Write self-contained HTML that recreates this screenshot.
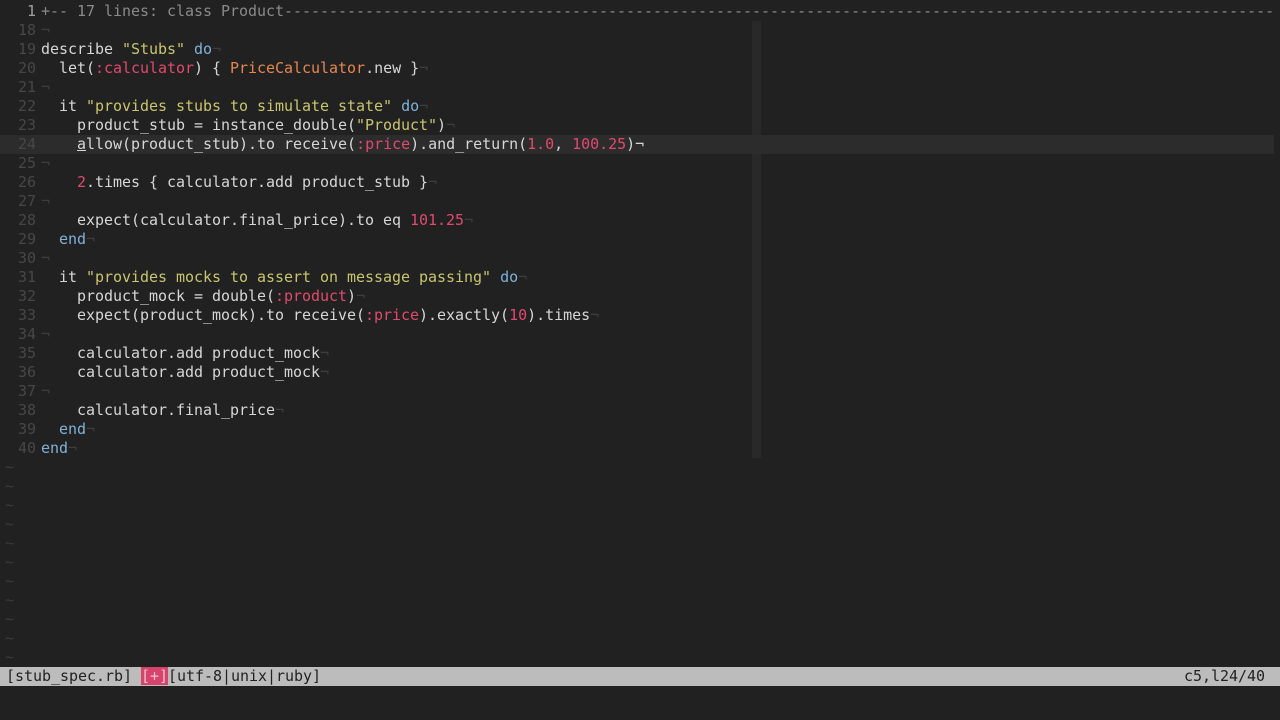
<!DOCTYPE html>
<html><head><meta charset="utf-8"><style>
html,body{margin:0;padding:0;background:#212121;width:1280px;height:720px;overflow:hidden}
body{font-family:"DejaVu Sans Mono","Liberation Mono",monospace;font-size:15px;color:#d6d6d6;letter-spacing:-0.03px}
.r{position:absolute;left:0;height:19px;line-height:19px;white-space:pre;width:1274px;overflow:hidden}
.n{display:inline-block;width:36px;text-align:right;color:#474747;margin-right:5px}
.cur{background:#2c2c2c}
.k{color:#7fb2d8}.s{color:#c9c56e}.y{color:#e04a6e}.c{color:#e5864f}.x{color:#3e3e3e}
.f{color:#8a8a8a}.t{color:#3a3a3a;padding-left:5px}
#cc{position:absolute;left:752px;top:21px;width:9px;height:437px;background:#292929}
#st{position:absolute;left:0;top:667px;width:1280px;height:19px;line-height:19px;background:#bcbcbc;color:#222;white-space:pre}
.p{background:#d6436b;color:#f0c0cc}
</style></head><body>
<div id="cc"></div>
<div class="r" style="top:2px"><span class="n" style="color:#a0a0a0">1</span><span class="f">+-- 17 lines: class Product----------------------------------------------------------------------------------------------------------------------</span></div>
<div class="r" style="top:21px"><span class="n">18</span><span class="x">¬</span></div>
<div class="r" style="top:40px"><span class="n">19</span>describe <span class="s">"Stubs"</span> <span class="k">do</span><span class="x">¬</span></div>
<div class="r" style="top:59px"><span class="n">20</span>  let(<span class="y">:calculator</span>) { <span class="c">PriceCalculator</span>.new }<span class="x">¬</span></div>
<div class="r" style="top:78px"><span class="n">21</span><span class="x">¬</span></div>
<div class="r" style="top:97px"><span class="n">22</span>  it <span class="s">"provides stubs to simulate state"</span> <span class="k">do</span><span class="x">¬</span></div>
<div class="r" style="top:116px"><span class="n">23</span>    product_stub = instance_double(<span class="s">"Product"</span>)<span class="x">¬</span></div>
<div class="r cur" style="top:135px"><span class="n">24</span>    <u>a</u>llow(product_stub).to receive(<span class="y">:price</span>).and_return(<span class="y">1.0</span>, <span class="y">100.25</span>)¬</div>
<div class="r" style="top:154px"><span class="n">25</span><span class="x">¬</span></div>
<div class="r" style="top:173px"><span class="n">26</span>    <span class="y">2</span>.times { calculator.add product_stub }<span class="x">¬</span></div>
<div class="r" style="top:192px"><span class="n">27</span><span class="x">¬</span></div>
<div class="r" style="top:211px"><span class="n">28</span>    expect(calculator.final_price).to eq <span class="y">101.25</span><span class="x">¬</span></div>
<div class="r" style="top:230px"><span class="n">29</span>  <span class="k">end</span><span class="x">¬</span></div>
<div class="r" style="top:249px"><span class="n">30</span><span class="x">¬</span></div>
<div class="r" style="top:268px"><span class="n">31</span>  it <span class="s">"provides mocks to assert on message passing"</span> <span class="k">do</span><span class="x">¬</span></div>
<div class="r" style="top:287px"><span class="n">32</span>    product_mock = double(<span class="y">:product</span>)<span class="x">¬</span></div>
<div class="r" style="top:306px"><span class="n">33</span>    expect(product_mock).to receive(<span class="y">:price</span>).exactly(<span class="y">10</span>).times<span class="x">¬</span></div>
<div class="r" style="top:325px"><span class="n">34</span><span class="x">¬</span></div>
<div class="r" style="top:344px"><span class="n">35</span>    calculator.add product_mock<span class="x">¬</span></div>
<div class="r" style="top:363px"><span class="n">36</span>    calculator.add product_mock<span class="x">¬</span></div>
<div class="r" style="top:382px"><span class="n">37</span><span class="x">¬</span></div>
<div class="r" style="top:401px"><span class="n">38</span>    calculator.final_price<span class="x">¬</span></div>
<div class="r" style="top:420px"><span class="n">39</span>  <span class="k">end</span><span class="x">¬</span></div>
<div class="r" style="top:439px"><span class="n">40</span><span class="k">end</span><span class="x">¬</span></div>
<div class="r" style="top:458px"><span class="t">~</span></div>
<div class="r" style="top:477px"><span class="t">~</span></div>
<div class="r" style="top:496px"><span class="t">~</span></div>
<div class="r" style="top:515px"><span class="t">~</span></div>
<div class="r" style="top:534px"><span class="t">~</span></div>
<div class="r" style="top:553px"><span class="t">~</span></div>
<div class="r" style="top:572px"><span class="t">~</span></div>
<div class="r" style="top:591px"><span class="t">~</span></div>
<div class="r" style="top:610px"><span class="t">~</span></div>
<div class="r" style="top:629px"><span class="t">~</span></div>
<div class="r" style="top:648px"><span class="t">~</span></div>
<div id="st"><span style="padding-left:6px">[stub_spec.rb] </span><span class="p">[+]</span>[utf-8|unix|ruby]<span style="position:absolute;right:15px">c5,l24/40</span></div>
</body></html>
